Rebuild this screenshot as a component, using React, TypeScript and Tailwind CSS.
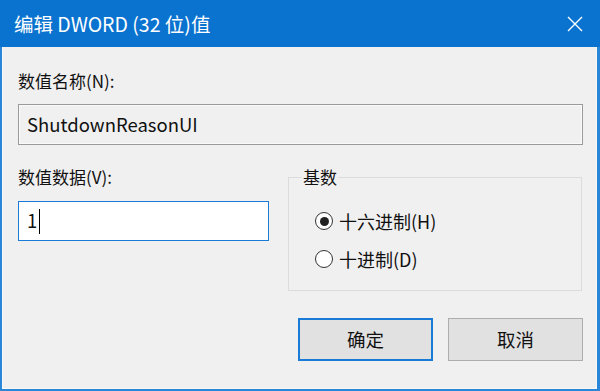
const font = { fontFamily: '"Noto Sans CJK SC", "Noto Sans", sans-serif' };

function Radio({ checked, label }: { checked: boolean; label: string }) {
  return (
    <div className="flex h-[24px] items-center">
      <span className="flex h-[18px] w-[18px] items-center justify-center rounded-full border border-[#333] bg-white">
        {checked && <span className="h-[9px] w-[9px] rounded-full bg-[#222]" />}
      </span>
      <span className="ml-[6px] text-[18px] leading-[24px] text-[#111]">{label}</span>
    </div>
  );
}

export default function App() {
  return (
    <div className="flex h-[391px] w-[600px] flex-col bg-[#0a73cf]" style={font}>
      {/* title bar */}
      <div className="flex h-[47px] shrink-0 items-center justify-between pl-[14px] pr-[17px] text-white">
        <span className="text-[19.5px] leading-[24px]">编辑 DWORD (32 位)值</span>
        <svg width="16" height="16" viewBox="0 0 16 16" fill="none" stroke="white" strokeWidth="1.4">
          <path d="M1 1 15 15M15 1 1 15" />
        </svg>
      </div>

      {/* client */}
      <div className="flex flex-1 flex-col border-b-[2px] border-l-[2px] border-r-[3px] border-[#2a86d8]">
        <div className="flex flex-1 flex-col border-b border-l border-r border-[#f8f8f8] bg-[#f0f0f0] pl-[15px] pr-[13px] text-[#111]">
          <div className="mt-[22px] text-[17px] leading-[24px]">数值名称(N):</div>
          <div className="mt-[11px] flex h-[41px] items-center border border-[#9a9a9a] bg-[#f0f0f0] px-[8px] text-[18.5px] shadow-[inset_0_0_0_1px_#fafafa]">
            ShutdownReasonUI
          </div>

          <div className="mt-[20px] flex">
            <div className="flex w-[251px] flex-col">
              <div className="text-[17px] leading-[24px]">数值数据(V):</div>
              <div className="mt-[12px] flex h-[40px] items-center border border-[#1a7bd6] bg-white px-[8px] text-[18.5px]">
                <span>1</span>
                <span className="ml-[2px] h-[25px] w-[1px] bg-black" />
              </div>
            </div>

            <fieldset className="ml-[19px] h-[126px] w-[294px] border border-[#dcdcdc] px-[26px]">
              <legend className="ml-[-13px] px-[1px] text-[17px] leading-[24px]">基数</legend>
              <div className="mt-[20px] flex flex-col gap-[14px]">
                <Radio checked label="十六进制(H)" />
                <Radio checked={false} label="十进制(D)" />
              </div>
            </fieldset>
          </div>

          <div className="mt-[27px] flex justify-end gap-[15px]">
            <button className="h-[43px] w-[135px] border-2 border-[#1a7bd6] bg-[#e1e1e1] text-[18.5px]">确定</button>
            <button className="h-[43px] w-[135px] border border-[#adadad] bg-[#e1e1e1] text-[18.5px]">取消</button>
          </div>
        </div>
      </div>
    </div>
  );
}
